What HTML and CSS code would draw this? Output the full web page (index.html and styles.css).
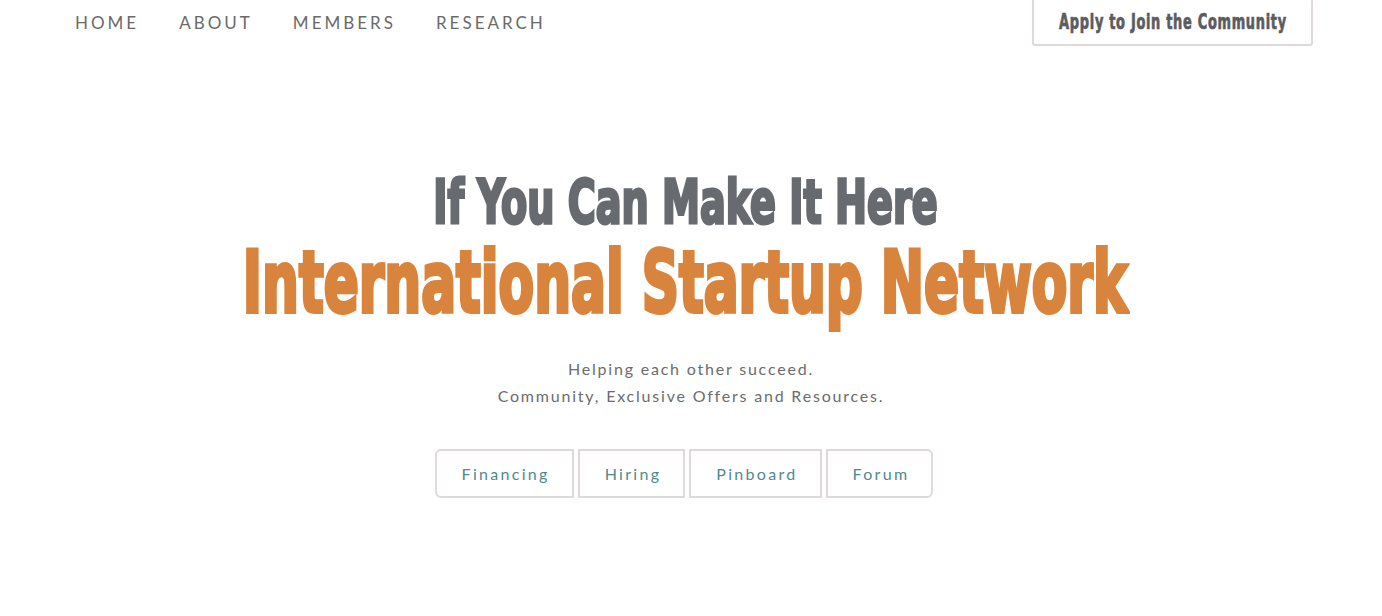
FILE: index.html
```html
<!DOCTYPE html>
<html lang="en">
<head>
<meta charset="utf-8">
<title>International Startup Network</title>
<link rel="stylesheet" href="styles.css">
</head>
<body>
<header class="topbar">
  <nav class="mainnav">
    <a class="navlink" href="#">HOME</a>
    <a class="navlink" href="#">ABOUT</a>
    <a class="navlink" href="#">MEMBERS</a>
    <a class="navlink" href="#">RESEARCH</a>
  </nav>
  <a class="applybtn" href="#"><span class="cond">Apply to Join the Community</span></a>
</header>
<main class="hero">
  <h1 class="headline">
    <span class="hl-row hl-small"><span class="cond">If You Can Make It Here</span></span>
    <span class="hl-row hl-big"><span class="cond">International Startup Network</span></span>
  </h1>
  <p class="tagline">Helping each other succeed.<br>Community, Exclusive Offers and Resources.</p>
  <div class="btngroup">
    <a class="gbtn" href="#">Financing</a>
    <a class="gbtn" href="#">Hiring</a>
    <a class="gbtn" href="#">Pinboard</a>
    <a class="gbtn" href="#">Forum</a>
  </div>
</main>
</body>
</html>
```
FILE: styles.css
```css
html, body {
  margin: 0;
  padding: 0;
  background: #ffffff;
  overflow-x: hidden;
}
body {
  font-family: "Lato", "Open Sans", sans-serif;
  color: #6a6a6a;
}
a { text-decoration: none; }

.topbar {
  display: flex;
  justify-content: space-between;
  align-items: flex-start;
  padding: 0 69px 0 75px;
  height: 46px;
}
.mainnav {
  display: flex;
  gap: 40px;
}
.navlink {
  font-size: 17px;
  line-height: 46px;
  letter-spacing: 3px;
  color: #6a6a6a;
}

.cond {
  display: inline-block;
  font-family: "DejaVu Sans Condensed", "DejaVu Sans", sans-serif;
  font-stretch: condensed;
  font-weight: 700;
  white-space: nowrap;
  transform-origin: center;
}

.applybtn {
  margin-top: -2px;
  width: 277px;
  height: 44px;
  border: 2px solid #dfd9da;
  border-radius: 3px;
  display: flex;
  justify-content: center;
  font-size: 21px;
  line-height: 44px;
  color: #5b5c61;
}
.applybtn .cond {
  letter-spacing: 1px;
  transform: scaleX(0.686);
  -webkit-text-stroke: 0.7px #5b5c61;
}

.hero {
  padding-top: 121px;
  text-align: center;
}
.headline {
  margin: 0 12px 0 0;
  font-weight: 700;
}
.hl-row {
  display: flex;
  justify-content: center;
}
.hl-small {
  font-size: 61px;
  line-height: 70px;
  color: #676b70;
}
.hl-small .cond {
  transform: scaleX(0.696);
  -webkit-text-stroke: 3px #676b70;
}
.hl-big {
  font-size: 86px;
  line-height: 90px;
  color: #d9843d;
}
.hl-big .cond {
  transform: scaleX(0.669);
  -webkit-text-stroke: 4px #d9843d;
}

.tagline {
  margin: 28px 0 0;
  font-size: 16px;
  line-height: 27px;
  letter-spacing: 1.8px;
  color: #6c6c6c;
}

.btngroup {
  display: flex;
  justify-content: center;
  gap: 4px;
  margin: 40px 14px 0 0;
}
.gbtn {
  display: block;
  height: 45px;
  padding: 0 22px 0 25px;
  border: 2px solid #e0d9db;
  font-size: 16px;
  line-height: 45px;
  letter-spacing: 2.3px;
  color: #4f8a8e;
}
.gbtn:first-child {
  border-radius: 6px 0 0 6px;
}
.gbtn:last-child {
  border-radius: 0 6px 6px 0;
}
```
